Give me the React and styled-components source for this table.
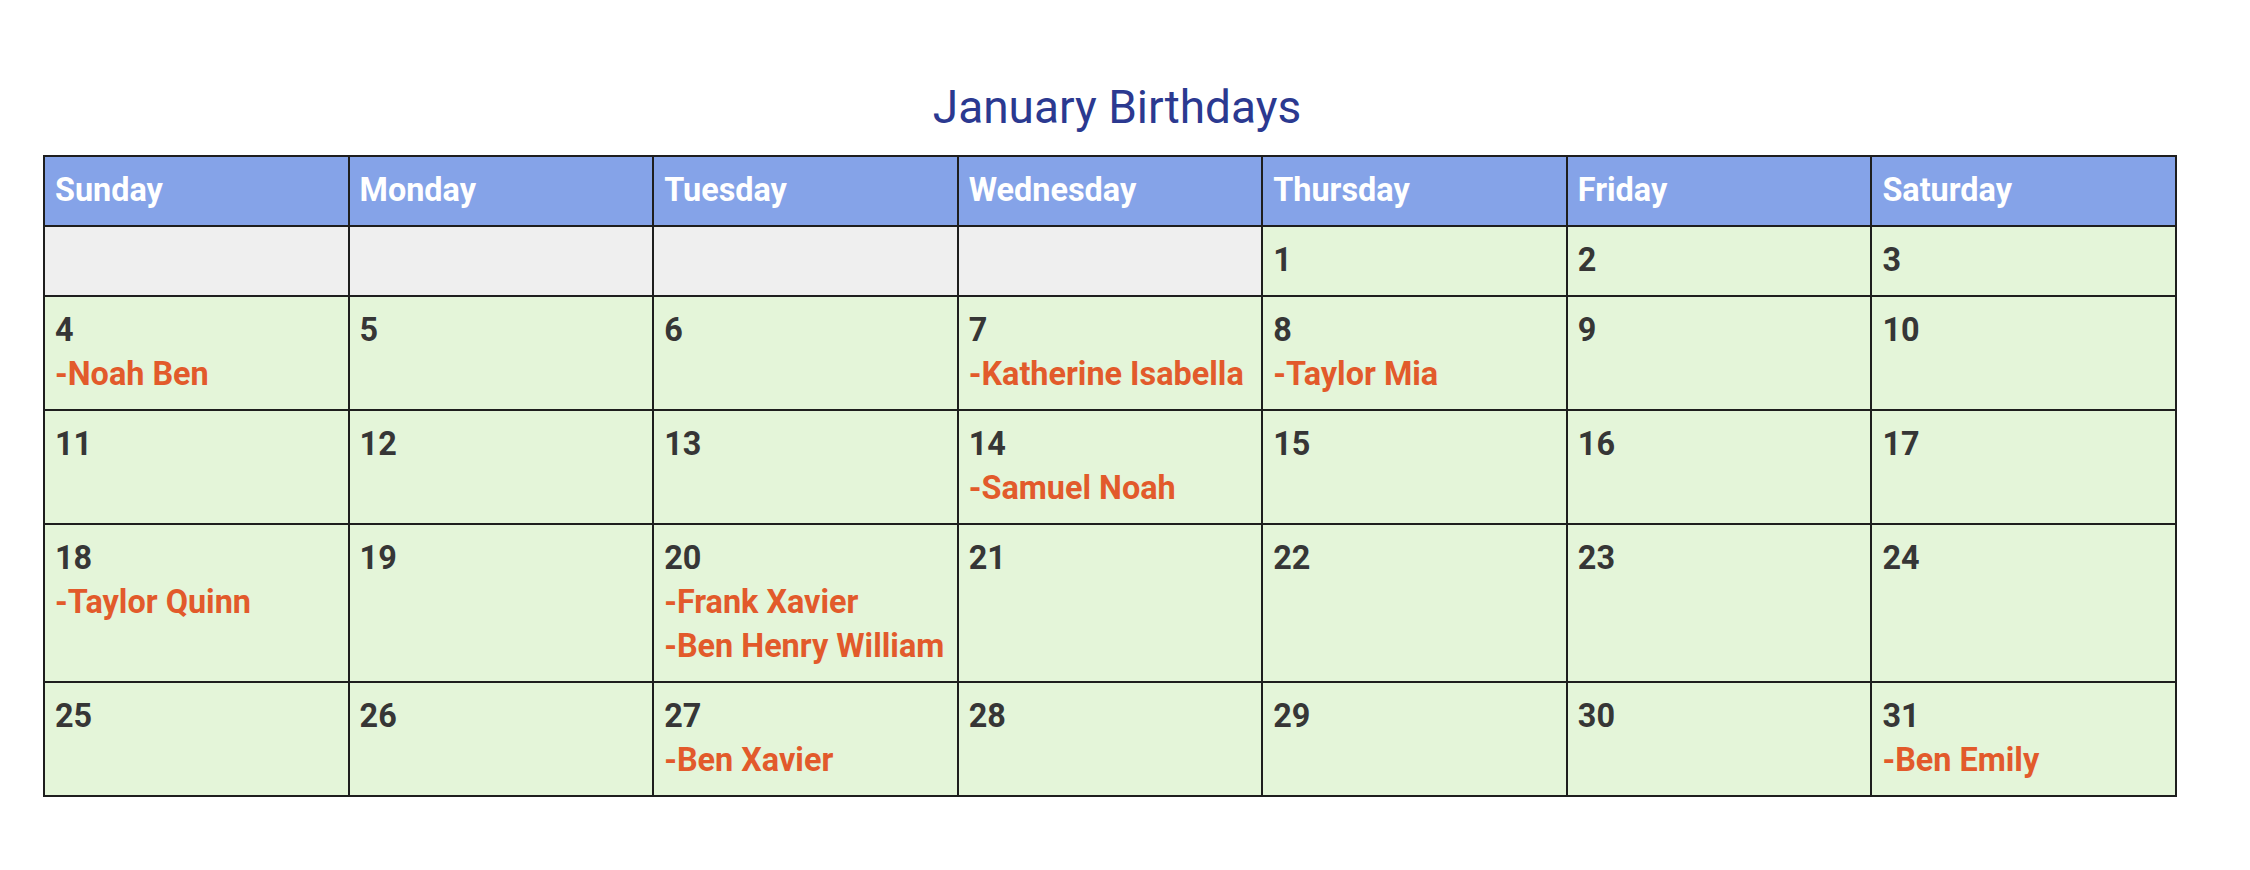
import React from "react";
import styled, { createGlobalStyle } from "styled-components";

const GlobalStyle = createGlobalStyle`
  html, body {
    margin: 0;
    padding: 0;
    background: #ffffff;
  }
  body {
    font-family: Roboto, "Noto Sans", "Liberation Sans", sans-serif;
  }
`;

const Page = styled.div`
  padding: 80px 0 0 43px;
  width: 2134px;
`;

const Title = styled.h1`
  margin: 0 0 21px 0;
  font-family: Roboto, "Liberation Sans", sans-serif;
  font-weight: 400;
  font-size: 46px;
  line-height: 54px;
  color: #2b3990;
  text-align: center;
  padding-left: 14px;
`;

const Calendar = styled.table`
  width: 2134px;
  table-layout: fixed;
  border-collapse: collapse;
  border: 2px solid #1e1e1e;
`;

const HeadCell = styled.th`
  background: #85a3e8;
  color: #ffffff;
  font-weight: 700;
  font-size: 32.4px;
  line-height: 44px;
  text-align: left;
  padding: 11px 10px 13px 10px;
  border: 2px solid #1e1e1e;
  vertical-align: top;
`;

const DayCell = styled.td`
  background: ${(p) => (p.$empty ? "#efefef" : "#e4f5d9")};
  font-size: 32.4px;
  line-height: 44px;
  font-weight: 700;
  padding: 11px 10px 13px 10px;
  border: 2px solid #1e1e1e;
  vertical-align: top;
`;

const DateNum = styled.div`
  color: #363636;
`;

const Name = styled.div`
  color: #e25a2b;
  white-space: nowrap;
`;

const days = ["Sunday", "Monday", "Tuesday", "Wednesday", "Thursday", "Friday", "Saturday"];

const birthdays = {
  4: ["Noah Ben"],
  7: ["Katherine Isabella"],
  8: ["Taylor Mia"],
  14: ["Samuel Noah"],
  18: ["Taylor Quinn"],
  20: ["Frank Xavier", "Ben Henry William"],
  27: ["Ben Xavier"],
  31: ["Ben Emily"],
};

const weeks = (() => {
  const cells = [null, null, null, null];
  for (let d = 1; d <= 31; d++) cells.push(d);
  const rows = [];
  for (let i = 0; i < cells.length; i += 7) rows.push(cells.slice(i, i + 7));
  return rows;
})();

export default function App() {
  return (
    <>
      <GlobalStyle />
      <Page>
        <Title>January Birthdays</Title>
        <Calendar>
          <thead>
            <tr>
              {days.map((d) => (
                <HeadCell key={d}>{d}</HeadCell>
              ))}
            </tr>
          </thead>
          <tbody>
            {weeks.map((week, wi) => (
              <tr key={wi}>
                {week.map((day, di) =>
                  day === null ? (
                    <DayCell key={di} $empty />
                  ) : (
                    <DayCell key={di}>
                      <DateNum>{day}</DateNum>
                      {(birthdays[day] || []).map((n) => (
                        <Name key={n}>-{n}</Name>
                      ))}
                    </DayCell>
                  )
                )}
              </tr>
            ))}
          </tbody>
        </Calendar>
      </Page>
    </>
  );
}
